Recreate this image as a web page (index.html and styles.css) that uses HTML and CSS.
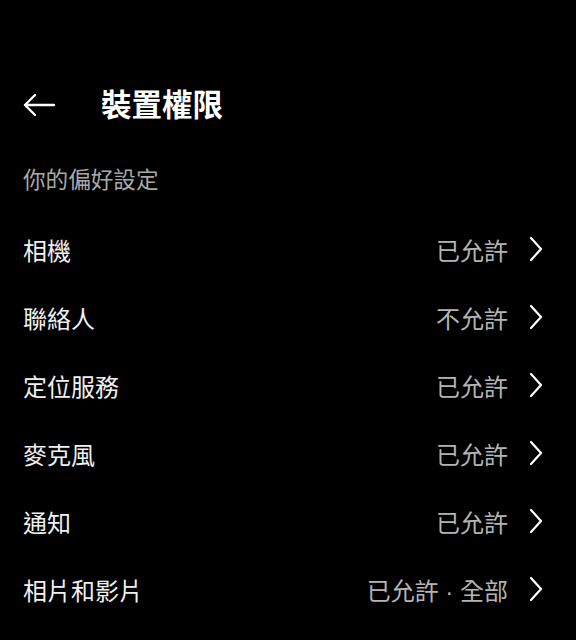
FILE: index.html
```html
<html>
<head>
    <title>裝置權限</title>
    <link rel="stylesheet" href="styles.css">
</head>
<body>
    <div class="page">
        <div class="header">
            <span class="back-btn">
                <svg viewBox="0 0 32 24" width="32" height="24">
                    <path d="M31 12H2M12 2L2 12l10 10" stroke="#fff" stroke-width="2.4" fill="none" stroke-linecap="round" stroke-linejoin="round"/>
                </svg>
            </span>
            <h1>裝置權限</h1>
        </div>

        <p class="section-label">你的偏好設定</p>

        <div class="list">
            <div class="row">
                <span class="row-name">相機</span>
                <span class="row-value">已允許</span>
                <svg class="chevron" viewBox="0 0 14 26"><path d="M2 2l10 11L2 24"/></svg>
            </div>
            <div class="row">
                <span class="row-name">聯絡人</span>
                <span class="row-value">不允許</span>
                <svg class="chevron" viewBox="0 0 14 26"><path d="M2 2l10 11L2 24"/></svg>
            </div>
            <div class="row">
                <span class="row-name">定位服務</span>
                <span class="row-value">已允許</span>
                <svg class="chevron" viewBox="0 0 14 26"><path d="M2 2l10 11L2 24"/></svg>
            </div>
            <div class="row">
                <span class="row-name">麥克風</span>
                <span class="row-value">已允許</span>
                <svg class="chevron" viewBox="0 0 14 26"><path d="M2 2l10 11L2 24"/></svg>
            </div>
            <div class="row">
                <span class="row-name">通知</span>
                <span class="row-value">已允許</span>
                <svg class="chevron" viewBox="0 0 14 26"><path d="M2 2l10 11L2 24"/></svg>
            </div>
            <div class="row">
                <span class="row-name">相片和影片</span>
                <span class="row-value">已允許<span class="dot"> · </span>全部</span>
                <svg class="chevron" viewBox="0 0 14 26"><path d="M2 2l10 11L2 24"/></svg>
            </div>
        </div>
    </div>
</body>
</html>
```

FILE: styles.css
```css
body {
    margin: 0;
    background-color: #000;
    color: #fff;
    font-family: "Noto Sans CJK TC", "Noto Sans", sans-serif;
}
.page {
    padding: 75px 33px 0 23px;
}
.header {
    display: flex;
    align-items: center;
    height: 56px;
}
.back-btn {
    display: flex;
    width: 32px;
    height: 24px;
    margin: 4px 46px 0 0;
}
.header h1 {
    margin: 0;
    font-size: 30.5px;
    font-weight: bold;
    line-height: 56px;
}
.section-label {
    margin: 33px 0 21px;
    font-size: 22.6px;
    line-height: 30px;
    color: #a8a8a8;
}
.row {
    display: flex;
    align-items: center;
    height: 68px;
}
.row-name {
    flex: 1;
    font-size: 24px;
    color: #f0f0f0;
}
.row-value {
    font-size: 24px;
    color: #b4b4b4;
    margin-right: 21px;
}
.dot {
    font-family: "Liberation Sans", sans-serif;
    white-space: pre;
}
.chevron {
    width: 14px;
    height: 26px;
    fill: none;
    stroke: #fff;
    stroke-width: 2.2;
    stroke-linecap: round;
    stroke-linejoin: round;
}
```
